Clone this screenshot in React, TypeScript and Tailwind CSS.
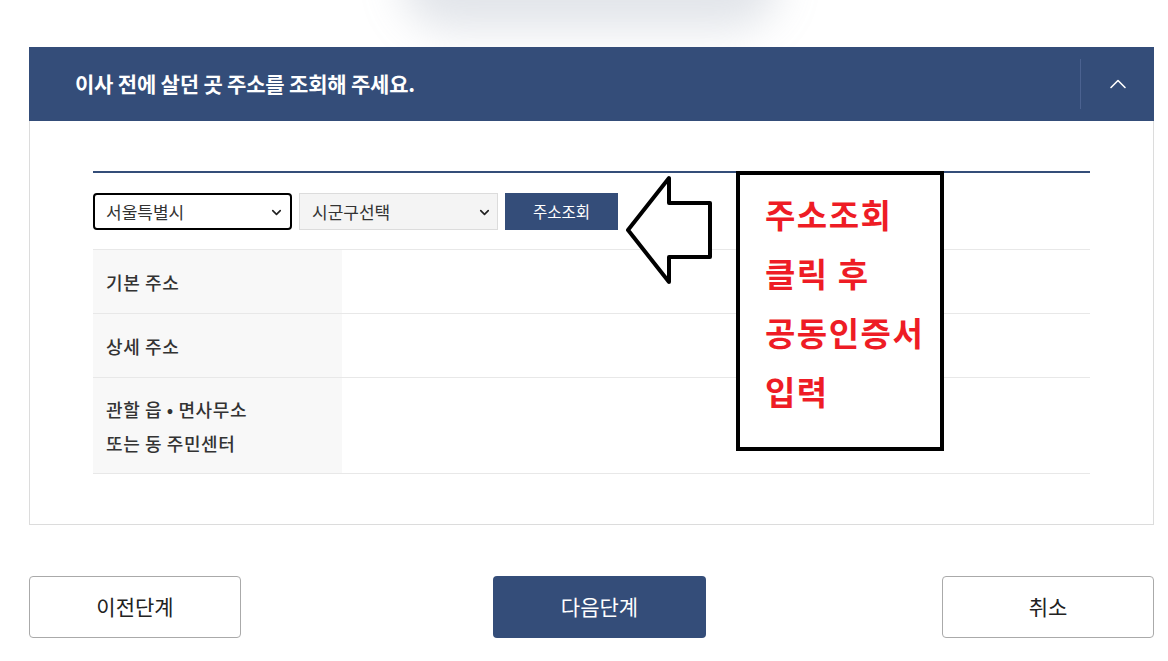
import { ChevronDown, ChevronUp } from "lucide-react";

const font = { fontFamily: '"Noto Sans CJK KR", "Noto Sans", sans-serif' };

function Row({ label, tall }: { label: React.ReactNode; tall?: boolean }) {
  return (
    <div className={`flex border-b border-[#e8e8e8] ${tall ? "h-[96px]" : "h-[64px]"}`}>
      <div className="w-[249px] bg-[#f8f8f8] pl-[13px] flex items-center text-[18px] font-medium text-[#333] leading-[34px] tracking-[0.6px]">
        {label}
      </div>
      <div className="flex-1" />
    </div>
  );
}

export default function App() {
  return (
    <div className="w-[1168px] h-[661px] bg-white overflow-hidden" style={font}>
      {/* shadow of floating element above */}
      <div className="relative h-[47px] overflow-hidden">
        <div className="absolute left-[420px] top-[-60px] w-[340px] h-[60px] rounded-full shadow-[0_10px_40px_20px_rgba(150,160,180,0.28)]" />
      </div>

      <div className="ml-[29px] w-[1125px]">
        {/* header */}
        <div className="h-[74px] bg-[#344d79] flex items-center">
          <h2 className="flex-1 pl-[46px] text-white text-[21px] font-bold tracking-[-0.2px]">
            이사 전에 살던 곳 주소를 조회해 주세요.
          </h2>
          <div className="w-[74px] h-[50px] border-l border-[#4b6290] flex items-center justify-center">
            <ChevronUp className="text-white" size={28} strokeWidth={1.4} />
          </div>
        </div>

        {/* body */}
        <div className="relative border border-t-0 border-[#dcdcdc] px-[63px] pt-[50px] pb-[50px]">
          <div className="h-[2px] bg-[#344d79]" />
          <div className="flex gap-[7px] mt-[20px] mb-[19px] h-[37px]">
            <div className="relative w-[199px] h-[37px] border-2 border-black rounded-[4px] flex items-center pl-[11px] text-[17px] text-[#333]">
              서울특별시
              <ChevronDown className="absolute right-[6px] top-[10px] text-[#222]" size={15} strokeWidth={2.6} />
            </div>
            <div className="relative w-[199px] h-[37px] border border-[#dcdcdc] bg-[#f4f4f4] flex items-center pl-[12px] text-[17px] text-[#333]">
              시군구선택
              <ChevronDown className="absolute right-[5px] top-[11px] text-[#222]" size={15} strokeWidth={2.6} />
            </div>
            <button className="w-[113px] h-[37px] bg-[#344d79] text-white text-[15.5px]">주소조회</button>
          </div>

          <div className="border-t border-[#e8e8e8]">
            <Row label="기본 주소" />
            <Row label="상세 주소" />
            <Row
              tall
              label={
                <div>
                  관할 읍 • 면사무소
                  <br />
                  또는 동 주민센터
                </div>
              }
            />
          </div>

          {/* annotation arrow */}
          <svg className="absolute left-[596px] top-[54px]" width="90" height="110" viewBox="596 175 90 110">
            <path
              d="M628 230 L669 178 L669 203 L710 203 L710 257 L669 257 L669 282 Z"
              fill="white"
              stroke="black"
              strokeWidth="4"
              strokeLinejoin="round"
              transform="translate(-30 0)"
            />
          </svg>

          {/* annotation box */}
          <div className="absolute left-[706px] top-[50px] w-[208px] h-[280px] border-[4px] border-black bg-white pl-[25px] pt-[10px] text-[#ee1c25] text-[33px] font-bold leading-[59px] tracking-[1.5px]">
            주소조회
            <br />
            클릭 후
            <br />
            공동인증서
            <br />
            입력
          </div>
        </div>

        {/* buttons */}
        <div className="flex mt-[51px]">
          <button className="w-[212px] h-[62px] border border-[#aaa] rounded-[4px] text-[21px] text-[#222]">이전단계</button>
          <button className="ml-[252px] w-[213px] h-[62px] bg-[#344d79] rounded-[4px] text-[21px] text-white">다음단계</button>
          <button className="ml-auto w-[212px] h-[62px] border border-[#aaa] rounded-[4px] text-[21px] text-[#222]">취소</button>
        </div>
      </div>
    </div>
  );
}
